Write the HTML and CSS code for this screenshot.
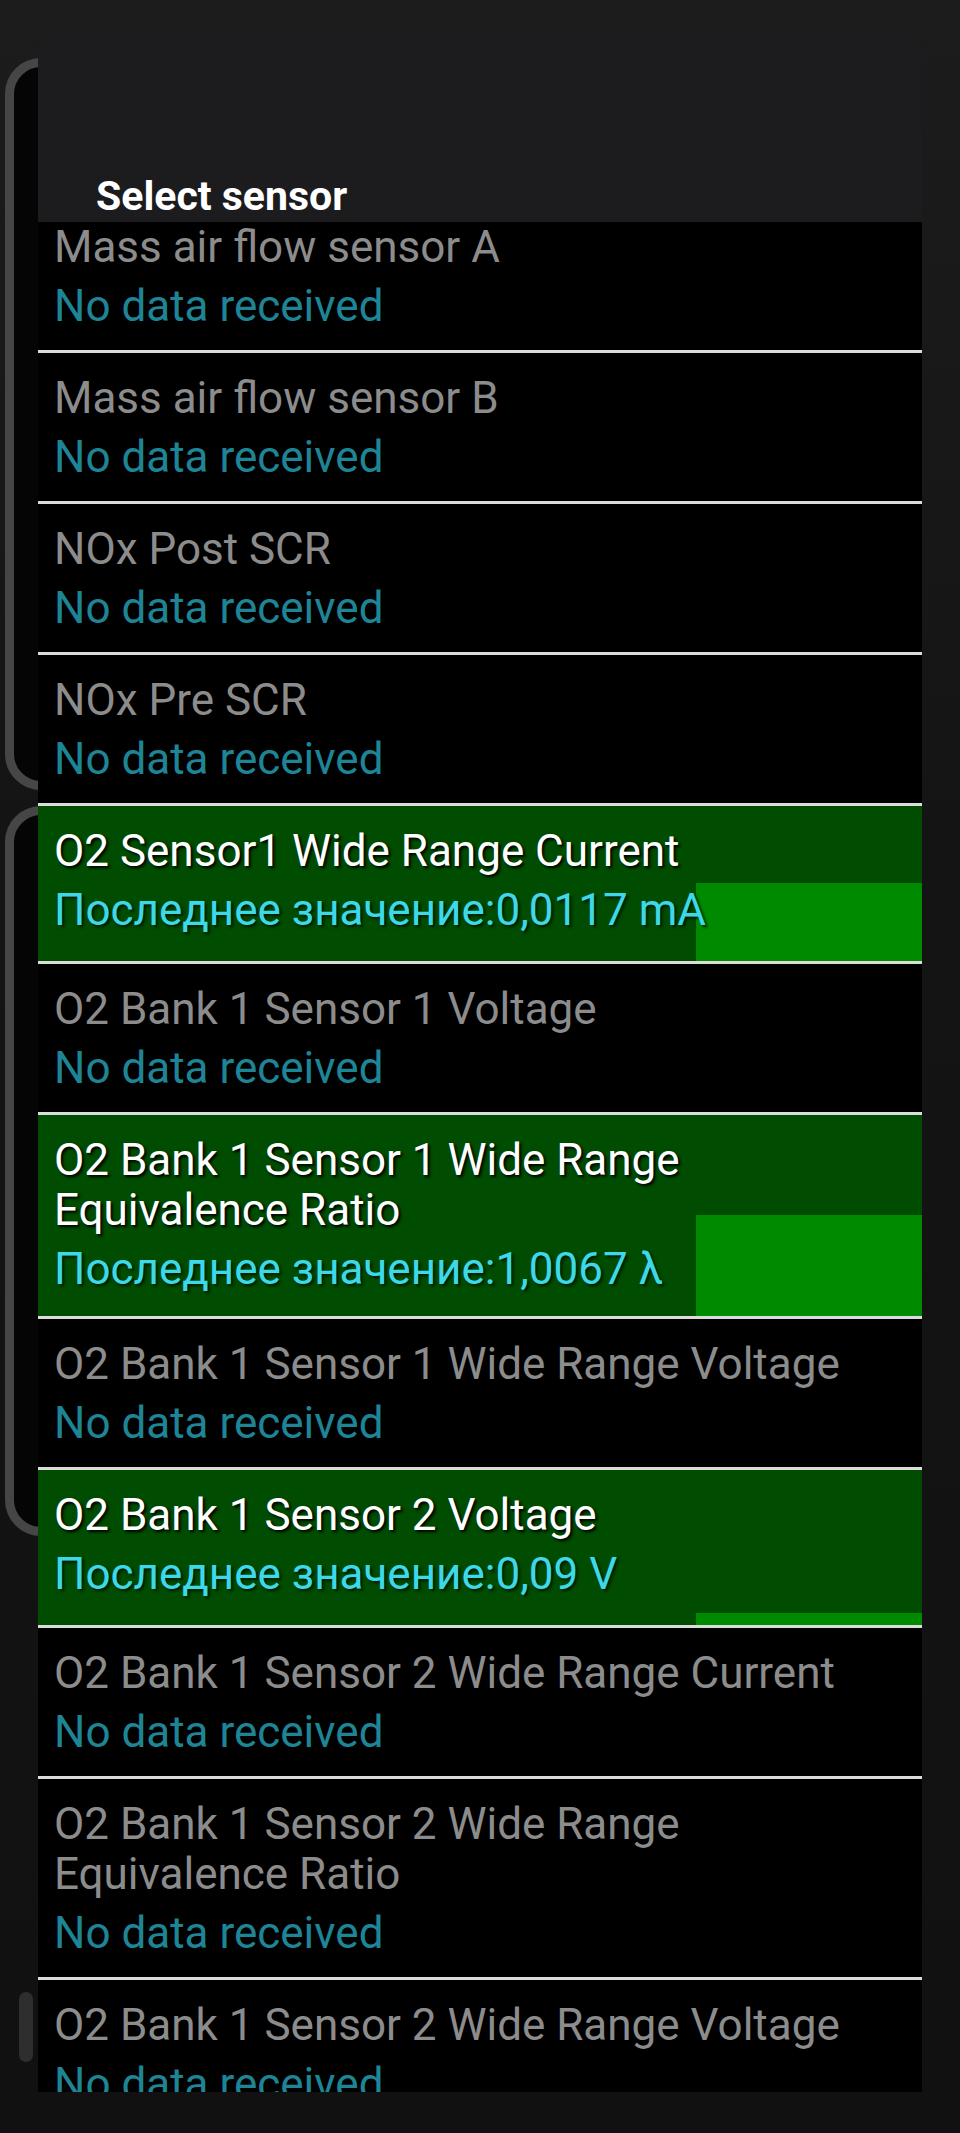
FILE: index.html
```html
<!DOCTYPE html>
<html lang="ru">
<head>
    <meta charset="UTF-8">
    <meta name="viewport" content="width=device-width, initial-scale=1.0">
    <title>Select sensor</title>
    <link rel="stylesheet" href="styles.css">
</head>
<body>
    <div class="screen">
        <!-- blurred app screen behind the dialog -->
        <div class="backdrop">
            <div class="frame frame-top"></div>
            <div class="frame frame-mid"></div>
            <div class="notch"></div>
        </div>

        <div class="dialog">
            <div class="dialog-header">
                <h1>Select sensor</h1>
            </div>
            <div class="sensor-list">
                <ul class="sensors">
                    <li class="sensor">
                        <div class="sensor-name">Mass air flow sensor A</div>
                        <div class="sensor-value">No data received</div>
                    </li>
                    <li class="sensor">
                        <div class="sensor-name">Mass air flow sensor B</div>
                        <div class="sensor-value">No data received</div>
                    </li>
                    <li class="sensor">
                        <div class="sensor-name">NOx Post SCR</div>
                        <div class="sensor-value">No data received</div>
                    </li>
                    <li class="sensor">
                        <div class="sensor-name">NOx Pre SCR</div>
                        <div class="sensor-value">No data received</div>
                    </li>
                    <li class="sensor live">
                        <div class="bar" style="height: 78px"></div>
                        <div class="sensor-name">O2 Sensor1 Wide Range Current</div>
                        <div class="sensor-value">Последнее значение:0,0117 mA</div>
                    </li>
                    <li class="sensor">
                        <div class="sensor-name">O2 Bank 1 Sensor 1 Voltage</div>
                        <div class="sensor-value">No data received</div>
                    </li>
                    <li class="sensor live">
                        <div class="bar" style="height: 101px"></div>
                        <div class="sensor-name">O2 Bank 1 Sensor 1 Wide Range Equivalence Ratio</div>
                        <div class="sensor-value">Последнее значение:1,0067 λ</div>
                    </li>
                    <li class="sensor">
                        <div class="sensor-name">O2 Bank 1 Sensor 1 Wide Range Voltage</div>
                        <div class="sensor-value">No data received</div>
                    </li>
                    <li class="sensor live">
                        <div class="bar" style="height: 12px"></div>
                        <div class="sensor-name">O2 Bank 1 Sensor 2 Voltage</div>
                        <div class="sensor-value">Последнее значение:0,09 V</div>
                    </li>
                    <li class="sensor">
                        <div class="sensor-name">O2 Bank 1 Sensor 2 Wide Range Current</div>
                        <div class="sensor-value">No data received</div>
                    </li>
                    <li class="sensor">
                        <div class="sensor-name">O2 Bank 1 Sensor 2 Wide Range Equivalence Ratio</div>
                        <div class="sensor-value">No data received</div>
                    </li>
                    <li class="sensor">
                        <div class="sensor-name">O2 Bank 1 Sensor 2 Wide Range Voltage</div>
                        <div class="sensor-value">No data received</div>
                    </li>
                </ul>
            </div>
        </div>
    </div>
</body>
</html>
```

FILE: styles.css
```css
/* General Styles */
body {
    margin: 0;
    background-color: #141414;
    font-family: Roboto, "Noto Sans", sans-serif;
}

.screen {
    display: grid;
    height: 2133px;
    overflow: hidden;
    background: linear-gradient(180deg, #1c1c1c 0%, #141414 40%, #111111 100%);
}

/* both layers share the same cell */
.backdrop,
.dialog {
    grid-area: 1 / 1;
}

/* Backdrop */
.backdrop {
    display: flex;
    flex-direction: column;
    align-items: flex-start;
    gap: 16px;
    padding: 58px 0 0 5px;
}

.frame {
    width: 240px;
    border: 9px solid #464646;
    border-radius: 36px;
    background-color: #050505;
    box-sizing: border-box;
}

.frame-top {
    height: 732px;
}

.frame-mid {
    height: 730px;
}

.notch {
    width: 14px;
    height: 70px;
    margin: 440px 0 0 14px;
    border-radius: 7px;
    background-color: #2e2e2e;
}

/* Dialog */
.dialog {
    align-self: start;
    display: flex;
    flex-direction: column;
    width: 884px;
    height: 2053px;
    margin: 39px 0 0 38px;
    background-color: #000;
    border-radius: 4px 4px 0 0;
    overflow: hidden;
}

.dialog-header {
    display: flex;
    align-items: flex-end;
    height: 183px;
    padding: 0 0 3px 58px;
    background-color: #1c1c1e;
    box-sizing: border-box;
}

.dialog-header h1 {
    margin: 0;
    color: #fff;
    font-size: 41px;
    font-weight: 700;
    line-height: 46px;
}

.sensor-list {
    flex: 1;
    overflow: hidden;
}

.sensors {
    list-style: none;
    margin: -23px 0 0;
    padding: 0;
}

.sensor {
    position: relative;
    padding: 20px 16px 19px;
    border-top: 3px solid #dcdcdc;
}

.sensor-name,
.sensor-value {
    position: relative;
    font-size: 44px;
    line-height: 50px;
}

.sensor-name {
    color: #8c8c8c;
}

.sensor-value {
    margin-top: 9px;
    color: #1e8596;
}

/* Sensors with live data */
.sensor.live {
    min-height: 158px;
    padding-bottom: 22px;
    background-color: #004c00;
    box-sizing: border-box;
}

.sensor.live .sensor-name {
    color: #fff;
    text-shadow: 2px 2px 3px #000;
}

.sensor.live .sensor-value {
    color: #3dd9ea;
    text-shadow: 2px 2px 3px #001a00;
}

.bar {
    position: absolute;
    right: 0;
    bottom: 0;
    width: 226px;
    background-color: #008a00;
}
```
